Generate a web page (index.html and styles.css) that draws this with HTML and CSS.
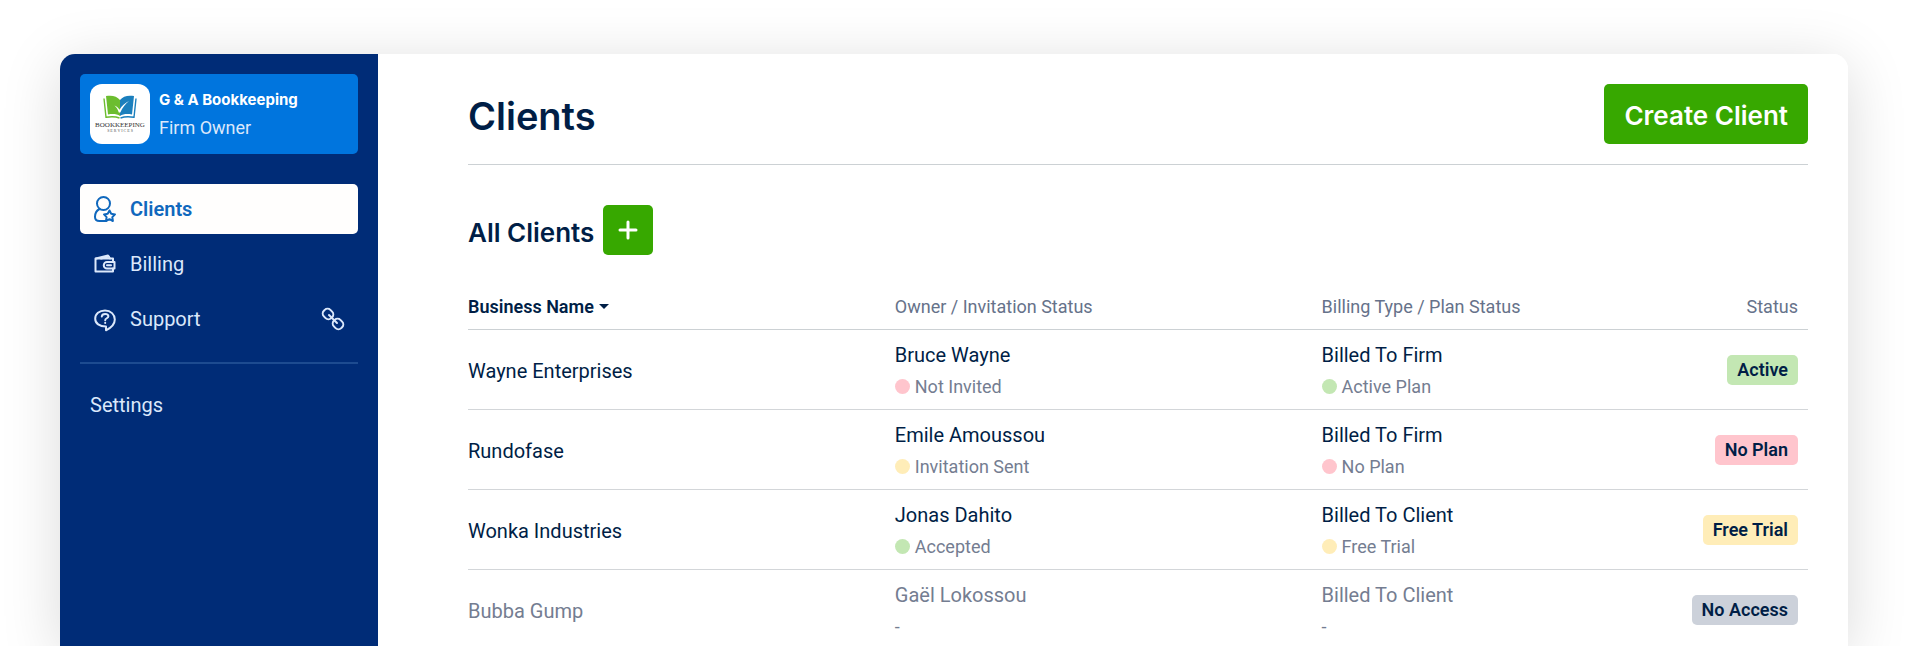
FILE: index.html
```html
<!DOCTYPE html>
<html lang="en">
  <head>
    <meta charset="UTF-8" />
    <meta name="viewport" content="width=device-width, initial-scale=1.0" />
    <title>Clients</title>
    <link rel="stylesheet" href="styles.css">
  </head>
  <body>
    <div class="app">
      <aside class="sidebar">
        <div class="firm">
          <svg class="firm-logo" viewBox="0 0 60 60" role="img" aria-label="Bookkeeping Services">
            <path fill="#6cbd2f" d="M16 12c6-1 11 0 14 4v16c-3-2-7-2.500-12-1.500z"/>
            <path fill="#1b7fbd" d="M44 12c-6-1-11 0-14 4v16c3-2 7-2.500 12-1.500z"/>
            <path fill="none" stroke="#6cbd2f" stroke-width="1.400" d="M14 14.500l2 18.800c5-.8 10-.6 13.500.7"/>
            <path fill="none" stroke="#1b7fbd" stroke-width="1.400" d="M46 14.500l-2 18.800c-5-.8-10-.6-13.500.7"/>
            <path fill="#fff" d="M24.500 21.500c2.200.8 4 2.400 5 4.300 2.200-4 5.300-6.800 9.500-8.800-3.500 3-6.600 6.500-8.700 11.500h-1.500c-.8-3-2.300-5.200-4.300-7z"/>
            <text class="logo-name" x="30" y="43" text-anchor="middle">BOOKKEEPING</text>
            <text class="logo-sub" x="30" y="48" text-anchor="middle">S E R V I C E S</text>
          </svg>
          <div>
            <div class="firm-name">G &amp; A Bookkeeping</div>
            <div class="firm-role">Firm Owner</div>
          </div>
        </div>

        <nav class="nav">
          <a class="nav-item active" href="#clients">
            <svg class="icon" viewBox="0 0 24 28">
              <circle cx="10.500" cy="8.500" r="6.500"/>
              <path d="M6.500 14C3.500 15.500 2 18.500 2 22c0 3 1.500 4 4.500 4H13"/>
              <path d="M16.500 15.500l1.700 3.300 3.800.6-2.700 2.700.6 3.900-3.400-1.800-3.500 1.800.6-3.900-2.600-2.700 3.700-.6z"/>
            </svg>
            Clients
          </a>
          <a class="nav-item" href="#billing">
            <svg class="icon" viewBox="0 0 24 28">
              <path d="M20 11.500V8.500H2.500V21.500H20v-3"/>
              <path d="M3 8.500L15 5.500l2 3M8 8.500L16 6.500"/>
              <path d="M21.500 12H14a3 3 0 0 0 0 6.500h7.500z"/>
              <path d="M14 15.200h4"/>
            </svg>
            Billing
          </a>
          <a class="nav-item" href="#support">
            <svg class="icon" viewBox="0 0 24 28">
              <path d="M13 21.500v3.800c4.500-2.200 8.800-5.300 8.800-10.800 0-5-4-9-9.800-9s-9.800 3.500-9.800 8.200 4.300 7.800 10.800 7.800z"/>
              <path d="M8.800 11.500c.3-3.600 6.600-3.200 6.600-.2 0 2.100-3.200 1.800-3.200 3.900"/>
              <path d="M12.200 17.700v.4"/>
            </svg>
            Support
            <svg class="icon-link" viewBox="0 0 24 24">
              <rect x="-5.200" y="-4.600" width="10.400" height="9.200" rx="4" transform="translate(7 7) rotate(45)"/>
              <rect x="-5.200" y="-4.600" width="10.400" height="9.200" rx="4" transform="translate(17 17) rotate(45)"/>
              <path d="M8 8l8 8"/>
            </svg>
          </a>
        </nav>

        <a class="settings" href="#settings">Settings</a>
      </aside>

      <main class="main">
        <header class="header">
          <h1>Clients</h1>
          <button class="btn" type="button">Create Client</button>
        </header>

        <div class="section-title">
          <h2>All Clients</h2>
          <button class="btn-add" type="button" aria-label="Add client">
            <svg viewBox="0 0 20 20"><path d="M10 2v16M2 10h16"/></svg>
          </button>
        </div>

        <table class="clients">
          <thead>
            <tr>
              <th><button class="sort" type="button">Business Name <span class="caret"></span></button></th>
              <th>Owner / Invitation Status</th>
              <th>Billing Type / Plan Status</th>
              <th class="status">Status</th>
            </tr>
          </thead>
          <tbody>
            <tr>
              <td>Wayne Enterprises</td>
              <td><div>Bruce Wayne</div><div class="sub"><span class="dot red"></span>Not Invited</div></td>
              <td><div>Billed To Firm</div><div class="sub"><span class="dot green"></span>Active Plan</div></td>
              <td class="status"><span class="badge green">Active</span></td>
            </tr>
            <tr>
              <td>Rundofase</td>
              <td><div>Emile Amoussou</div><div class="sub"><span class="dot yellow"></span>Invitation Sent</div></td>
              <td><div>Billed To Firm</div><div class="sub"><span class="dot red"></span>No Plan</div></td>
              <td class="status"><span class="badge red">No Plan</span></td>
            </tr>
            <tr>
              <td>Wonka Industries</td>
              <td><div>Jonas Dahito</div><div class="sub"><span class="dot green"></span>Accepted</div></td>
              <td><div>Billed To Client</div><div class="sub"><span class="dot yellow"></span>Free Trial</div></td>
              <td class="status"><span class="badge yellow">Free Trial</span></td>
            </tr>
            <tr class="disabled">
              <td>Bubba Gump</td>
              <td><div>Gaël Lokossou</div><div class="sub">-</div></td>
              <td><div>Billed To Client</div><div class="sub">-</div></td>
              <td class="status"><span class="badge gray">No Access</span></td>
            </tr>
          </tbody>
        </table>
      </main>
    </div>
  </body>
</html>
```

FILE: styles.css
```css
* {
  box-sizing: border-box;
}

body {
  display: flex;
  flex-direction: column;
  margin: 0;
  height: 100vh;
  overflow: hidden;
  background-color: #fff;
  color: #001e46;
  font-family: Roboto, "Noto Sans", sans-serif;
  font-size: 20px;
}

button {
  border: none;
  padding: 0;
  cursor: pointer;
}

a {
  color: inherit;
  text-decoration: none;
}

.app {
  display: flex;
  flex: 1;
  min-height: 0;
  margin: 54px 61px 0 60px;
  border-radius: 15px 15px 0 0;
  box-shadow: 0 10px 60px rgba(0, 0, 0, 0.15);
  overflow: hidden;
}

/* sidebar */
.sidebar {
  flex: none;
  width: 318px;
  padding: 20px;
  background-color: #002c77;
  color: #dbe8fb;
}

.firm {
  display: flex;
  align-items: center;
  gap: 9px;
  height: 80px;
  padding: 10px;
  border-radius: 5px;
  background-color: #0075de;
}

.firm-logo {
  width: 60px;
  height: 60px;
  border-radius: 12px;
  background-color: #fff;
}

.logo-name {
  font: 7px "Liberation Serif", serif;
  fill: #333;
}

.logo-sub {
  font: 4px "Liberation Serif", serif;
  fill: #555;
}

.firm-name {
  color: #fff;
  font-family: Inter, sans-serif;
  font-size: 15px;
  font-weight: 700;
  line-height: 28px;
}

.firm-role {
  font-size: 18px;
  line-height: 28px;
}

.nav {
  display: flex;
  flex-direction: column;
  gap: 5px;
  margin-top: 30px;
  padding-bottom: 18px;
  border-bottom: 2px solid #1d4b90;
}

.nav-item {
  display: flex;
  align-items: center;
  gap: 13px;
  height: 50px;
  padding: 0 13px;
  border-radius: 5px;
}

.nav-item.active {
  background-color: #fffefd;
  color: #1068bd;
  font-weight: 600;
}

.icon,
.icon-link,
.btn-add svg {
  fill: none;
  stroke: currentColor;
  stroke-width: 2;
  stroke-linejoin: round;
  stroke-linecap: round;
}

.icon {
  width: 24px;
  height: 28px;
}

.icon-link {
  width: 24px;
  height: 24px;
  margin-left: auto;
}

.settings {
  display: block;
  padding: 0 10px;
  margin-top: 21px;
  line-height: 40px;
}

/* content */
.main {
  flex: 1;
  padding: 30px 40px 0 90px;
  background-color: #fff;
}

.header {
  display: flex;
  align-items: center;
  justify-content: space-between;
  padding-bottom: 20px;
  border-bottom: 1px solid #ccd1d4;
}

h1,
h2 {
  margin: 0;
  padding-top: 4px;
  font-family: Inter, sans-serif;
  font-weight: 600;
}

h1 {
  font-size: 38px;
}

h2 {
  font-size: 26px;
}

.btn {
  height: 60px;
  padding: 3px 20px 0;
  border-radius: 5px;
  background-color: #37a800;
  color: #fff;
  font-family: Inter, sans-serif;
  font-size: 26px;
  font-weight: 600;
}

.section-title {
  display: flex;
  align-items: center;
  gap: 9px;
  margin-top: 40px;
}

.btn-add {
  display: flex;
  align-items: center;
  justify-content: center;
  width: 50px;
  height: 50px;
  border-radius: 5px;
  background-color: #37a800;
  color: #fff;
}

.btn-add svg {
  width: 20px;
  height: 20px;
  stroke-width: 3;
}

.clients {
  width: 100%;
  margin-top: 30px;
  border-collapse: collapse;
  table-layout: fixed;
}

.clients th {
  height: 44px;
  padding: 0;
  border-bottom: 1px solid #ccd1d4;
  color: #66728a;
  font-size: 18px;
  font-weight: 400;
  text-align: left;
}

.clients td {
  height: 80px;
  padding: 3px 0 0;
  border-bottom: 1px solid #d3d6d9;
  line-height: 32px;
}

.clients th:nth-child(1),
.clients th:nth-child(2) {
  width: 31.85%;
}

.clients th.status,
.clients td.status {
  padding: 0 10px 0 0;
  text-align: right;
  white-space: nowrap;
}

.sort {
  display: flex;
  align-items: center;
  gap: 5px;
  background: none;
  color: #001e46;
  font: 600 18px Roboto, "Noto Sans", sans-serif;
}

.caret {
  border: 5px solid transparent;
  border-top-color: #001e46;
  border-bottom: none;
}

.sub {
  display: flex;
  align-items: center;
  gap: 5px;
  color: #747d91;
  font-size: 18px;
}

.dot {
  width: 15px;
  height: 15px;
  border-radius: 50%;
}

.badge {
  display: inline-block;
  padding: 0 10px;
  border-radius: 5px;
  font-size: 18px;
  font-weight: 600;
  line-height: 30px;
}

.green {
  background-color: #c3e7b3;
}

.red {
  background-color: #ffc5cd;
}

.yellow {
  background-color: #ffedb8;
}

.gray {
  background-color: #ccd1da;
}

.disabled td {
  color: #747d91;
}

.disabled .badge {
  color: #001e46;
}
```
